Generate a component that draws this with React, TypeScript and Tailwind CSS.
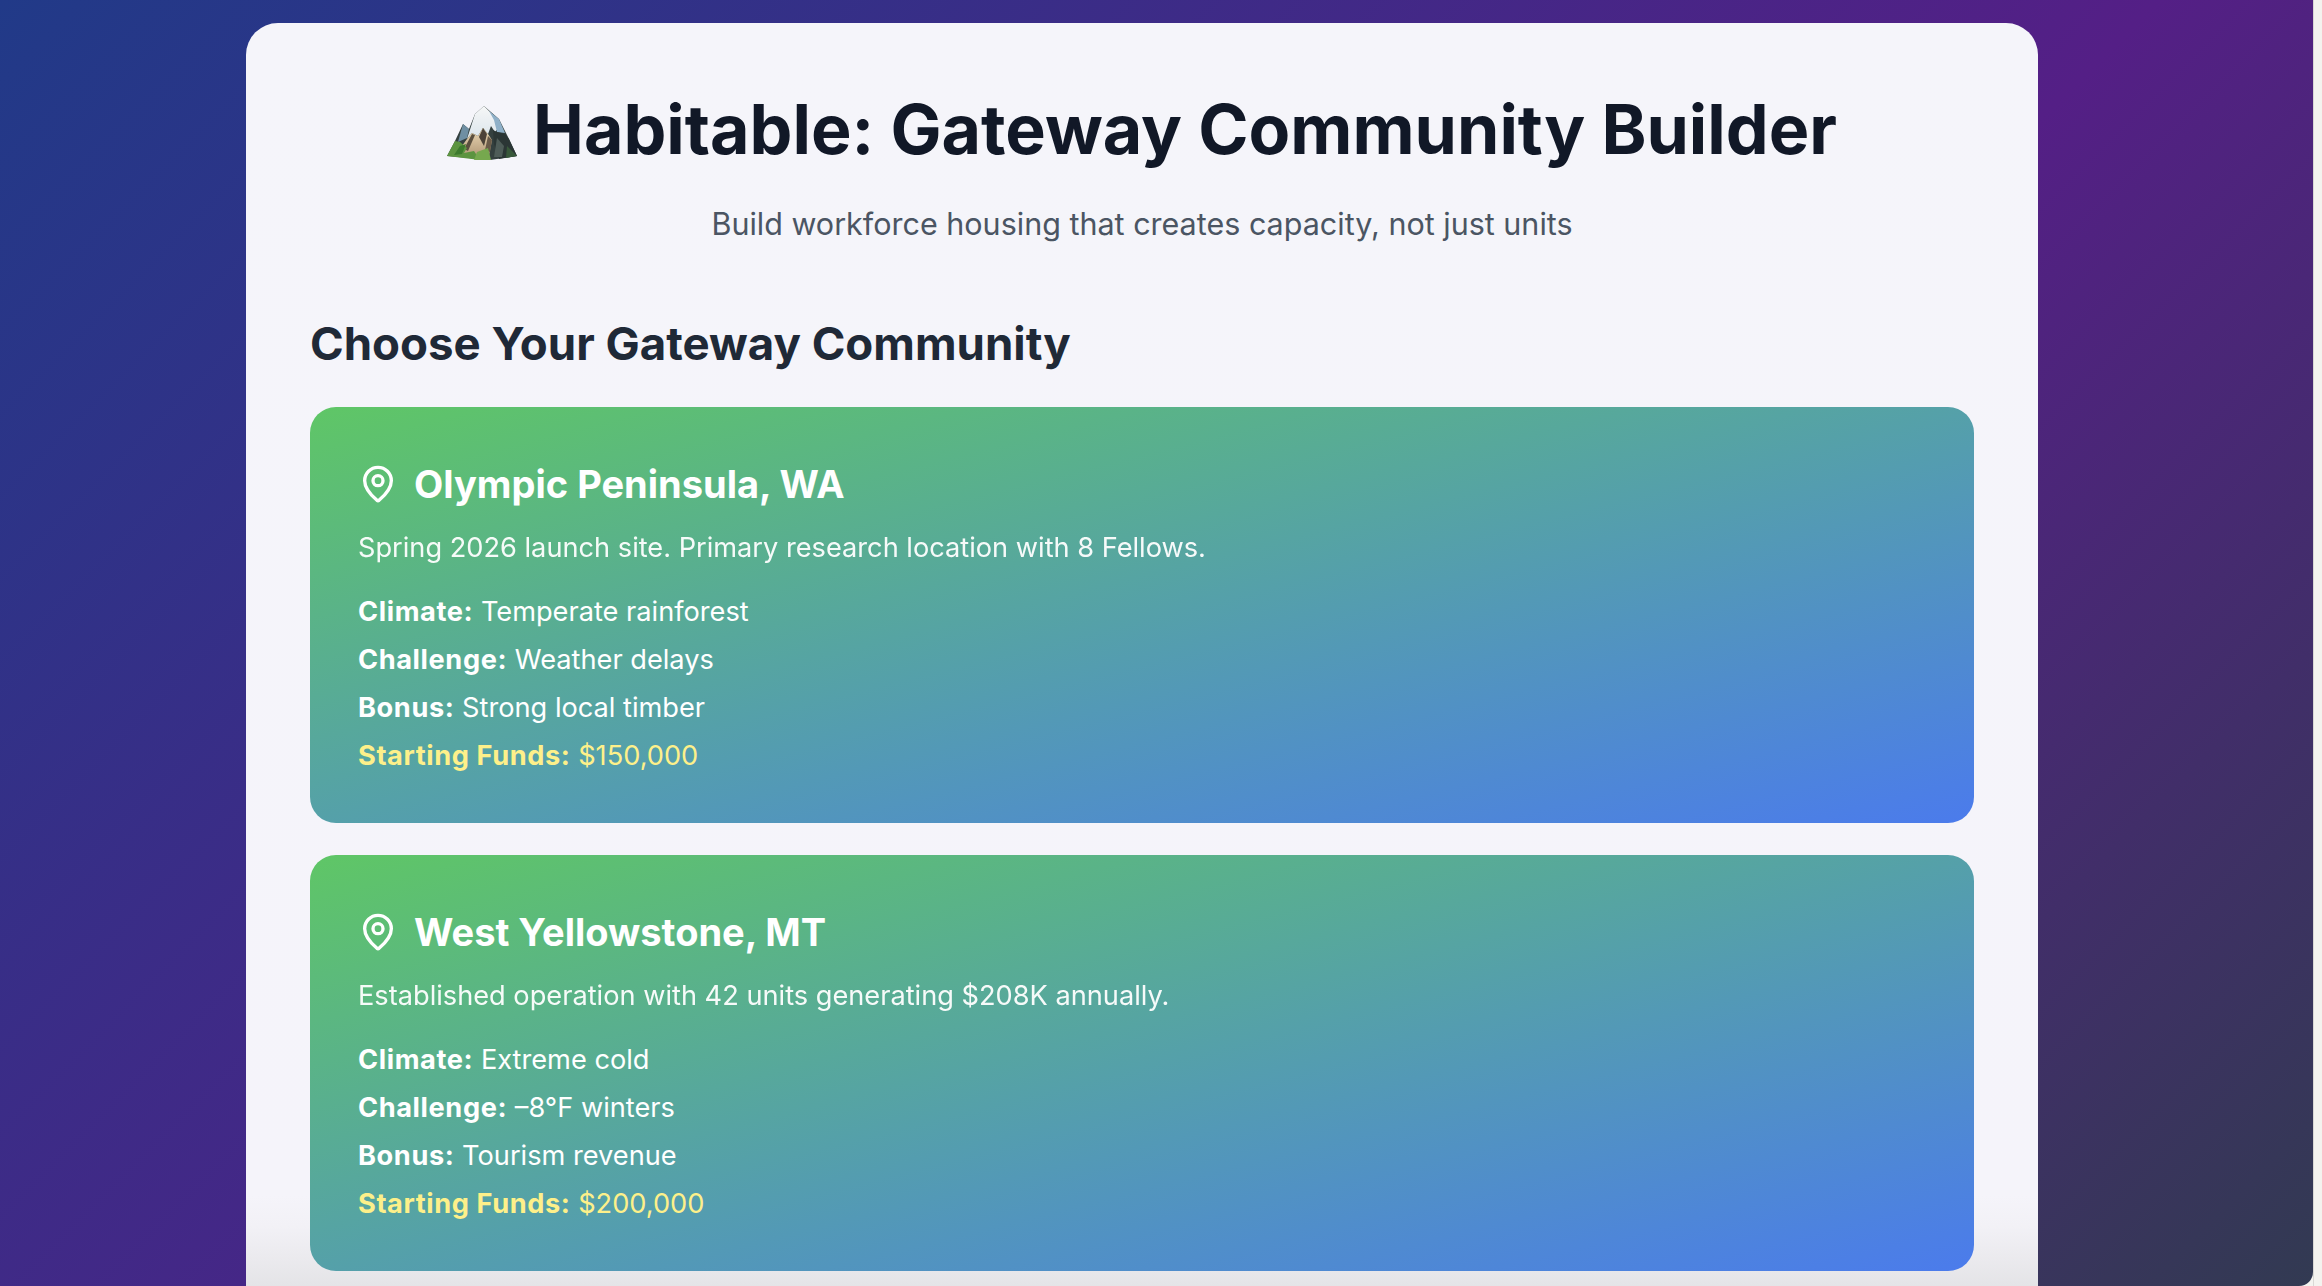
import { MapPin } from 'lucide-react';

const sites = [
  {
    name: 'Olympic Peninsula, WA',
    blurb: 'Spring 2026 launch site. Primary research location with 8 Fellows.',
    climate: 'Temperate rainforest',
    challenge: 'Weather delays',
    bonus: 'Strong local timber',
    funds: '$150,000',
  },
  {
    name: 'West Yellowstone, MT',
    blurb: 'Established operation with 42 units generating $208K annually.',
    climate: 'Extreme cold',
    challenge: '–8°F winters',
    bonus: 'Tourism revenue',
    funds: '$200,000',
  },
];

function Mountain() {
  return (
    <svg viewBox="0 0 70 54" className="w-[70px] h-[54px] mr-[16px] mt-[8px] shrink-0 blur-[0.5px]">
      <defs>
        <linearGradient id="snow" x1="0" y1="0" x2="0" y2="1">
          <stop offset="0" stopColor="#f6f7f7" />
          <stop offset="1" stopColor="#dbe5ec" />
        </linearGradient>
        <linearGradient id="rock" x1="0" y1="0" x2="0" y2="1">
          <stop offset="0" stopColor="#ecd9b6" />
          <stop offset="1" stopColor="#b39a78" />
        </linearGradient>
      </defs>
      {/* base silhouette */}
      <polygon points="37,0 52,13 62,33 70,50 43,54 0,50 8,35 16,18 22,23 28,8" fill="#34403f" />
      <polygon points="16,18 22,23 20,32 11,36" fill="#6f8fa3" />
      {/* snow cap */}
      <polygon points="37,0 46,9 53,20 48,26 44,20 41,28 36,22 31,30 25,27 20,33 28,8" fill="url(#snow)" />
      <polygon points="42,5 52,13 58,27 50,26 47,14" fill="#8fb0c8" />
      {/* bare rock */}
      <polygon points="20,33 25,27 31,30 36,22 41,28 45,34 42,50 16,48 12,44" fill="url(#rock)" />
      <polygon points="36,22 40,28 37,40 32,31" fill="#4c4238" />
      <polygon points="25,28 28,29 21,45 17,43" fill="#5a4f3f" />
      <polygon points="41,30 45,34 43,46 38,44" fill="#6a5b49" />
      {/* shaded right face */}
      <polygon points="46,24 50,26 58,28 62,33 70,50 52,53 47,38" fill="#2b3635" />
      <polygon points="50,32 57,40 55,51 47,51" fill="#4e5c58" />
      {/* trees */}
      <polygon points="8,35 13,36 20,42 17,47 27,45 33,54 0,50" fill="#5c9440" />
      <polygon points="30,46 41,42 44,54 27,54" fill="#76a84e" />
      <polygon points="13,40 19,38 15,48 7,49" fill="#3c7a2d" />
      <polygon points="60,40 66,46 70,50 59,52" fill="#38583a" />
    </svg>
  );
}

function SiteCard({ site }: { site: (typeof sites)[number] }) {
  return (
    <div className="rounded-[26px] px-[48px] pt-[48px] pb-[47px] text-white bg-[linear-gradient(to_bottom_right,#5fc666,#4b7bec)]">
      <div className="flex items-center gap-[16px] mb-[16px]">
        <MapPin size={40} strokeWidth={2} className="shrink-0" />
        <h3 className="text-[38px] leading-[58px] font-bold">{site.name}</h3>
      </div>
      <p className="text-[27.2px] leading-[38.4px] mb-[26px] opacity-95">{site.blurb}</p>
      <div className="flex flex-col gap-[9.6px] text-[27.2px] leading-[38.4px]">
        <div>
          <strong className="font-bold tracking-[0.6px]">Climate:</strong> {site.climate}
        </div>
        <div>
          <strong className="font-bold tracking-[0.6px]">Challenge:</strong> {site.challenge}
        </div>
        <div>
          <strong className="font-bold tracking-[0.6px]">Bonus:</strong> {site.bonus}
        </div>
        <div className="text-[#fdf08a]">
          <strong className="font-bold tracking-[0.6px]">Starting Funds:</strong> {site.funds}
        </div>
      </div>
    </div>
  );
}

export default function App() {
  return (
    <div className="flex h-[1286px] w-full overflow-hidden bg-[#f4f3ef] font-['Inter',sans-serif]">
      <div className="flex-1 flex flex-col items-start pt-[23px] pl-[246px] rounded-br-[14px] overflow-hidden bg-[linear-gradient(135deg,#213a88_0%,#541f86_60%,#323a52_100%)]">
        <div className="w-[1792px] flex-1 rounded-t-[32px] px-[64px] pt-[64px] bg-[linear-gradient(to_bottom,#f5f5fa_0,#f5f4fa_calc(100%-90px),#f2f1f6_calc(100%-60px),#ebeaee_calc(100%-28px),#e4e4e7_100%)]">
          <div className="flex justify-center items-center">
            <Mountain />
            <h1 className="text-[68.1px] leading-[84px] font-bold text-[#111827]">Habitable: Gateway Community Builder</h1>
          </div>
          <p className="text-center text-[30.5px] leading-[48px] mt-[29px] text-[#4b5563]">
            Build workforce housing that creates capacity, not just units
          </p>
          <h2 className="text-[45.6px] leading-[64px] font-bold text-[#1f2937] mt-[64px] mb-[31px]">
            Choose Your Gateway Community
          </h2>
          <div className="flex flex-col gap-[32px]">
            {sites.map((site) => (
              <SiteCard key={site.name} site={site} />
            ))}
          </div>
        </div>
      </div>
      <div className="w-[9px] shrink-0 border-l border-[#d9d8d4]" />
    </div>
  );
}
